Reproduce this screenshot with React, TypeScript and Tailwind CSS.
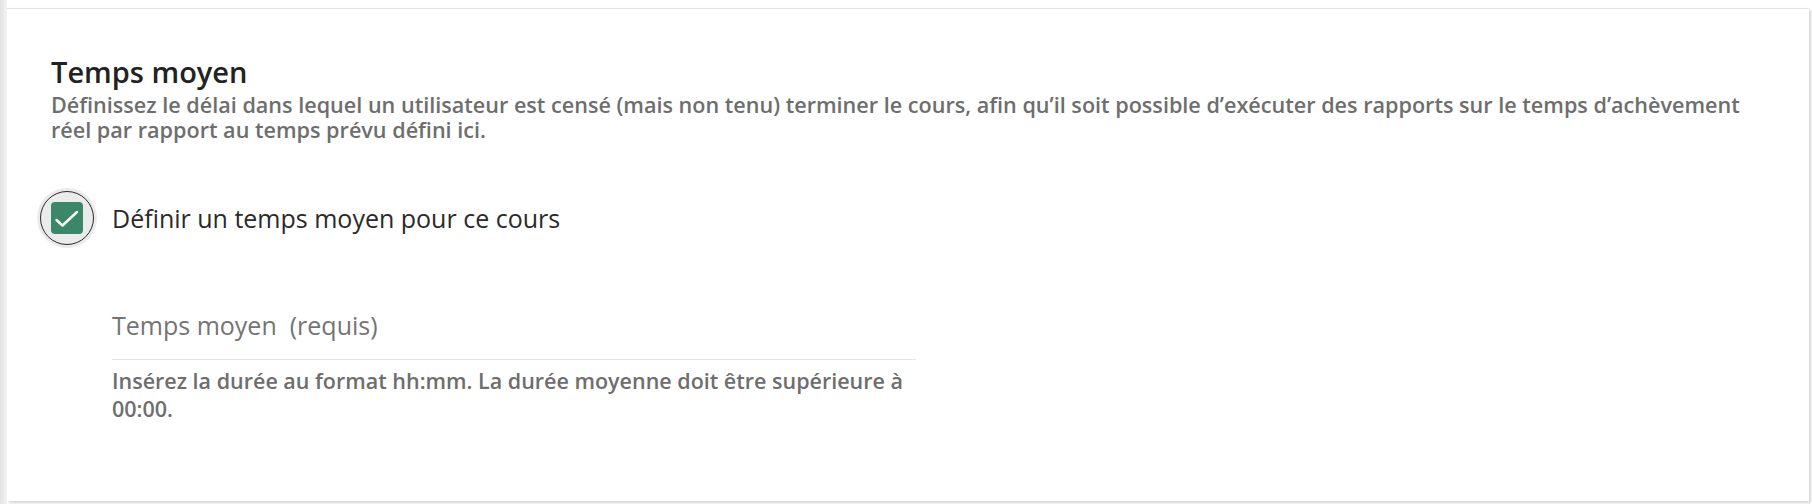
export default function App() {
  return (
    <div
      className="flex h-[504px] w-[1812px] overflow-hidden bg-white"
      style={{ fontFamily: '"Open Sans", "Noto Sans", sans-serif' }}
    >
      {/* left gutter shadow */}
      <div className="h-full w-[7px] shrink-0 bg-gradient-to-r from-[#e2e2e2] to-[#f4f4f4]" />

      <div className="flex flex-1 flex-col">
        <div className="h-[8px] shrink-0 bg-white" />
        <div className="mr-[3px] mb-[3px] flex-1 border-t border-[#e6e6e6] bg-white pl-[44px] pr-[24px] pt-[46px] shadow-[2px_2px_3px_rgba(0,0,0,0.18)]">
          {/* Header */}
          <h2 className="text-[29px] leading-[34px] font-semibold text-[#222]">Temps moyen</h2>
          <p className="mt-[3px] text-[21.6px] leading-[25px] font-semibold text-[#6e6e6e]">
            Définissez le délai dans lequel un utilisateur est censé (mais non tenu) terminer le cours, afin qu’il soit
            possible d’exécuter des rapports sur le temps d’achèvement réel par rapport au temps prévu défini ici.
          </p>

          {/* Checkbox row */}
          <div className="mt-[46px] flex items-center">
            <div className="-ml-[14px] flex h-[60px] w-[60px] items-center justify-center rounded-full bg-[#ebebeb]">
              <div className="flex h-[54px] w-[54px] items-center justify-center rounded-full border border-[#2a2a2a]">
                <div className="flex h-[32px] w-[32px] items-center justify-center rounded-[4px] bg-[#3b8868]">
                  <svg width="32" height="32" viewBox="0 0 32 32" fill="none">
                    <polyline
                      points="5.5,18 11.5,23.5 26,10"
                      stroke="white"
                      strokeWidth="2.4"
                      strokeLinecap="round"
                      strokeLinejoin="round"
                    />
                  </svg>
                </div>
              </div>
            </div>
            <span className="ml-[15px] text-[25px] leading-[32px] text-[#2a2a2a]">
              Définir un temps moyen pour ce cours
            </span>
          </div>

          {/* Field */}
          <div className="ml-[61px] mt-[61px] w-[804px]">
            <div className="pb-[18px] text-[25px] leading-[32px] text-[#747474]">Temps moyen&nbsp; (requis)</div>
            <div className="h-px bg-[#e3e3e3]" />
            <p className="mt-[7px] text-[21.5px] leading-[28px] font-semibold text-[#6e6e6e]">
              Insérez la durée au format hh:mm. La durée moyenne doit être supérieure à 00:00.
            </p>
          </div>
        </div>
      </div>
    </div>
  );
}
